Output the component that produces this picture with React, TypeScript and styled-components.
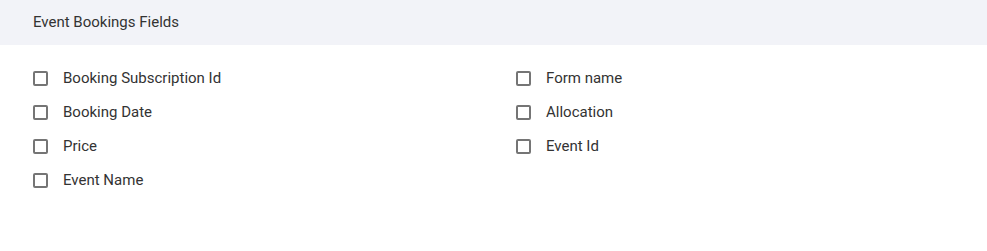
import styled, { createGlobalStyle } from 'styled-components';

const GlobalStyle = createGlobalStyle`
    body {
        margin: 0;
        background: #ffffff;
        font-family: Roboto, "Liberation Sans", sans-serif;
    }
`

const leftFields = ['Booking Subscription Id', 'Booking Date', 'Price', 'Event Name'];
const rightFields = ['Form name', 'Allocation', 'Event Id'];

const Field = ({ label }: { label: string }) => {
    return (
        <Row>
            <Box type='checkbox' />
            <Label>{label}</Label>
        </Row>
    );
};

const App = () => {
    return (
        <Page>
            <GlobalStyle />
            <Header>Event Bookings Fields</Header>
            <Grid>
                <Column>
                    {leftFields.map(f => <Field key={f} label={f} />)}
                </Column>
                <Column>
                    {rightFields.map(f => <Field key={f} label={f} />)}
                </Column>
            </Grid>
        </Page>
    );
};

export default App;

const Page = styled.div`
    width: 987px;
    height: 251px;
    background: #fff;
`
const Header = styled.div`
    height: 45px;
    display: flex;
    align-items: center;
    padding: 0 0 1px 33px;
    box-sizing: border-box;
    background: #f2f3f8;
    font-size: 15px;
    color: #333;
`
const Grid = styled.div`
    display: grid;
    grid-template-columns: 483px 1fr;
    padding: 16px 0 0 33px;
`
const Column = styled.div`
    display: flex;
    flex-direction: column;
`
const Row = styled.label`
    height: 34px;
    display: flex;
    align-items: center;
    cursor: pointer;
`
const Box = styled.input`
    appearance: none;
    margin: 0 15px 0 0;
    width: 15px;
    height: 15px;
    border: 2px solid #757575;
    border-radius: 2px;
    box-sizing: border-box;
    background: #fff;
`
const Label = styled.span`
    font-size: 15px;
    color: #333;
`
